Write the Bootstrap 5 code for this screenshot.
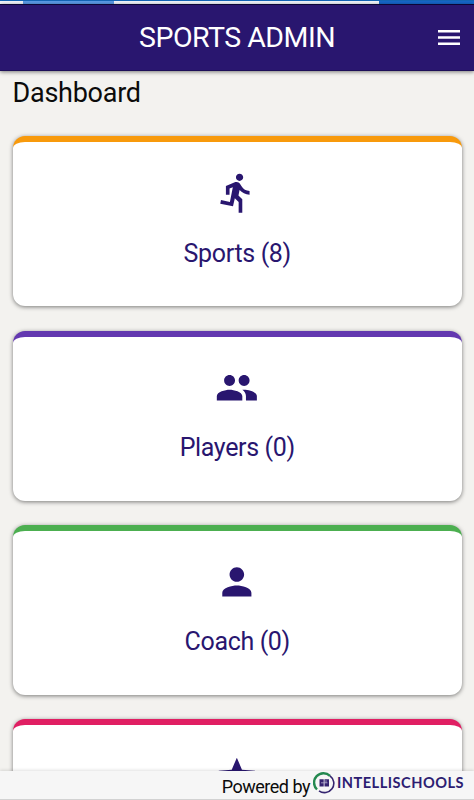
<!DOCTYPE html>
<html lang="en">
<head>
<meta charset="utf-8">
<meta name="viewport" content="width=device-width, initial-scale=1">
<title>Sports Admin</title>
<link href="https://cdn.jsdelivr.net/npm/bootstrap@5.3.0/dist/css/bootstrap.min.css" rel="stylesheet">
<style>
body{font-family:Roboto,sans-serif;background:#f3f2ef;color:#0b0b0b}
.screen{height:800px}
.progress-line{height:4px;background:#f1f5fb;border-top:1px solid #1565b5}
.progress-line .seg-a{margin-left:23px;width:91px;background:#5b9be6}
.progress-line .seg-b{margin-left:265px;background:#1667c9}
.topbar{height:67px;background:#29166f;border-top:1px solid #0c0536;border-bottom:1px solid #1d0f58;box-shadow:0 1px 4px rgba(0,0,0,.5);z-index:1}
.topbar h1{font-size:28.5px;line-height:34px;letter-spacing:-.5px}
.menu-btn{right:13px;top:20px}
.page-title{font-size:27px;line-height:32px;margin:6px 0 27.3px;letter-spacing:-.25px}
.content{padding:0 12px 0 12.5px}
.tile{height:170px;margin-bottom:24.3px;border:0;border-top:6px solid var(--accent);border-radius:12px;box-shadow:0 1px 4px rgba(0,0,0,.5);padding-top:29px;color:#29166f}
.tile svg{width:43.7px;height:43.7px;fill:#29166f}
.tile-label{font-size:25px;line-height:30px;margin-top:23.7px;letter-spacing:-.35px}
.footer-bar{height:29px;background:#f6f6f6;border-bottom:1px solid #d2d2d2;box-shadow:0 -1px 3px rgba(0,0,0,.12);z-index:1;padding-right:10px}
.powered{font-size:18px;line-height:22px;margin-top:5px;margin-right:3px;letter-spacing:-.5px}
.brand-name{font-family:Lato,sans-serif;font-weight:700;font-size:14.6px;line-height:22px;letter-spacing:.48px;color:#2d1d72;margin-top:1px}
.brand-mark{width:22px;height:22px;margin-top:1px;margin-right:2px}
</style>
</head>
<body>
<div class="screen d-flex flex-column overflow-hidden">
  <div class="progress-line d-flex flex-shrink-0"><div class="seg-a"></div><div class="seg-b flex-fill"></div></div>
  <header class="topbar position-relative d-flex flex-shrink-0 align-items-center justify-content-center text-white">
    <h1 class="m-0 fw-normal">SPORTS ADMIN</h1>
    <button class="menu-btn btn p-0 border-0 position-absolute d-flex" aria-label="Menu">
      <svg width="24" height="25" viewBox="0 0 24 25" fill="#fff"><path d="M1 5h22v2.5H1zM1 11.3h22v2.5H1zM1 17.5h22V20H1z"/></svg>
    </button>
  </header>
  <main class="content flex-fill overflow-hidden">
    <h2 class="page-title fw-normal">Dashboard</h2>
    <div class="tile card align-items-center" style="--accent:#f89a0c">
      <svg viewBox="0 0 24 24"><path d="M13.49 5.48c1.1 0 2-.9 2-2s-.9-2-2-2-2 .9-2 2 .9 2 2 2zm-3.6 13.9 1-4.4 2.1 2v6h2v-7.5l-2.1-2 .6-3c1.3 1.5 3.3 2.5 5.5 2.5v-2c-1.9 0-3.5-1-4.3-2.4l-1-1.6c-.4-.6-1-1-1.7-1-.3 0-.5.1-.8.1l-5.2 2.2v4.7h2v-3.4l1.8-.7-1.6 8.1-4.9-1-.4 2 7 1.4z"/></svg>
      <div class="tile-label">Sports (8)</div>
    </div>
    <div class="tile card align-items-center" style="--accent:#6338b0">
      <svg viewBox="0 0 24 24"><path d="M16 11c1.66 0 2.99-1.34 2.99-3S17.66 5 16 5s-3 1.34-3 3 1.34 3 3 3zm-8 0c1.66 0 2.99-1.34 2.99-3S9.66 5 8 5 5 6.34 5 8s1.34 3 3 3zm0 2c-2.33 0-7 1.17-7 3.5V19h14v-2.5c0-2.33-4.67-3.5-7-3.5zm8 0c-.29 0-.62.02-.97.05 1.16.84 1.97 1.97 1.97 3.45V19h6v-2.5c0-2.33-4.67-3.5-7-3.5z"/></svg>
      <div class="tile-label">Players (0)</div>
    </div>
    <div class="tile card align-items-center" style="--accent:#4caf50">
      <svg viewBox="0 0 24 24"><path d="M12 12c2.21 0 4-1.79 4-4s-1.79-4-4-4-4 1.79-4 4 1.79 4 4 4zm0 2c-2.67 0-8 1.34-8 4v2h16v-2c0-2.66-5.33-4-8-4z"/></svg>
      <div class="tile-label">Coach (0)</div>
    </div>
    <div class="tile card align-items-center" style="--accent:#e01f63">
      <svg viewBox="0 0 24 24"><path d="M12 17.27 18.18 21l-1.64-7.03L22 9.24l-7.19-.61L12 2 9.19 8.63 2 9.24l5.46 4.73L5.82 21z"/></svg>
    </div>
  </main>
  <footer class="footer-bar position-relative d-flex flex-shrink-0 justify-content-end align-items-start">
    <span class="powered">Powered by</span>
    <svg class="brand-mark" viewBox="0 0 22 22" fill="none">
      <path d="M4 17.5A9.3 9.3 0 0 1 17 3.8" stroke="#23884f" stroke-width="2.4"/>
      <path d="M17 3.8A9.3 9.3 0 0 1 6 18.8" stroke="#35246f" stroke-width="1.6"/>
      <path d="M6.5 7.3h4.2v7.2H6.5zM11.5 7.3H16v7.2h-4.5z" fill="#35246f"/>
      <path d="M8 10.8h6.5M13 8.2v2.5" stroke="#c5c0dc" stroke-width=".7"/>
    </svg>
    <span class="brand-name">INTELLISCHOOLS</span>
  </footer>
</div>
<script src="https://cdn.jsdelivr.net/npm/bootstrap@5.3.0/dist/js/bootstrap.bundle.min.js"></script>
</body>
</html>
